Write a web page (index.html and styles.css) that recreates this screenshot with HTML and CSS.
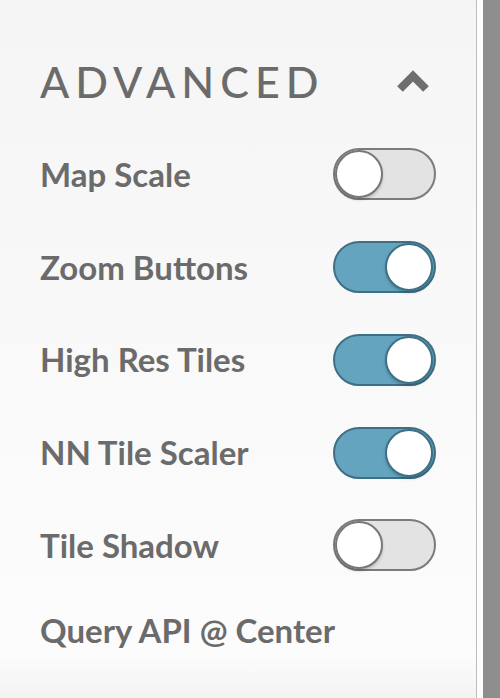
FILE: index.html
```html
<!DOCTYPE html>
<html>
<head>
<meta charset="utf-8">
<link rel="stylesheet" href="styles.css">
</head>
<body>
<div class="frame">
  <section class="panel">
    <header class="panel-head">
      <h2 class="title">ADVANCED</h2>
      <svg class="chevron" width="32" height="23" viewBox="0 0 32 23"><path d="M3 19 L16 6 L29 19" fill="none" stroke="#6e6e6e" stroke-width="8" stroke-linecap="butt" stroke-linejoin="miter"/></svg>
    </header>
    <ul class="options">
      <li class="option"><span class="label">Map Scale</span><span class="toggle"><span class="knob"></span></span></li>
      <li class="option"><span class="label">Zoom Buttons</span><span class="toggle on"><span class="knob"></span></span></li>
      <li class="option"><span class="label">High Res Tiles</span><span class="toggle on"><span class="knob"></span></span></li>
      <li class="option"><span class="label">NN Tile Scaler</span><span class="toggle on"><span class="knob"></span></span></li>
      <li class="option"><span class="label">Tile Shadow</span><span class="toggle"><span class="knob"></span></span></li>
      <li class="option option-plain"><span class="label">Query API @ Center</span></li>
    </ul>
  </section>
  <div class="divider"></div>
  <div class="gap"></div>
  <div class="scrollbar"></div>
</div>
</body>
</html>
```

FILE: styles.css
```css
html, body {
  margin: 0;
  padding: 0;
  width: 500px;
  height: 698px;
  overflow: hidden;
}
body {
  font-family: "Lato", "DejaVu Sans", sans-serif;
  color: #6b6b6b;
}
.frame {
  display: flex;
  width: 500px;
  height: 698px;
}
.panel {
  width: 476px;
  box-sizing: border-box;
  padding: 52px 40px 0 40px;
  background: linear-gradient(180deg, #f5f5f5 0%, #f9f9f9 50%, #fcfcfc 94%, #f3f3f3 100%);
}
.divider {
  width: 1px;
  background: #bdbdbd;
}
.gap {
  width: 6px;
  background: #fdfdfd;
}
.scrollbar {
  flex: 1;
  background: #8e8e8e;
}
.panel-head {
  display: flex;
  justify-content: space-between;
  align-items: center;
  height: 58px;
}
.title {
  margin: 0;
  font-size: 43px;
  font-weight: 500;
  letter-spacing: 6px;
  line-height: 1;
}
.chevron {
  display: block;
  margin-right: 7px;
}
.options {
  list-style: none;
  margin: 18px 0 0 0;
  padding: 0;
}
.option {
  display: flex;
  justify-content: space-between;
  align-items: center;
  height: 92.75px;
}
.option-plain {
  height: 78px;
}
.label {
  font-size: 33px;
  font-weight: 700;
  line-height: 1;
}
.toggle {
  display: flex;
  justify-content: flex-start;
  width: 103px;
  height: 52px;
  box-sizing: border-box;
  border: 2px solid #7b7b7b;
  border-radius: 26px;
  background: #e3e3e3;
}
.toggle.on {
  justify-content: flex-end;
  background: #64a4bf;
  border-color: #3e7085;
  padding-right: 1px;
}
.knob {
  width: 48px;
  height: 48px;
  box-sizing: border-box;
  border-radius: 50%;
  background: #ffffff;
  border: 2px solid #777777;
  box-shadow: 0 2px 3px rgba(0, 0, 0, 0.18);
}
.toggle.on .knob {
  border-color: #3e7085;
}
```
